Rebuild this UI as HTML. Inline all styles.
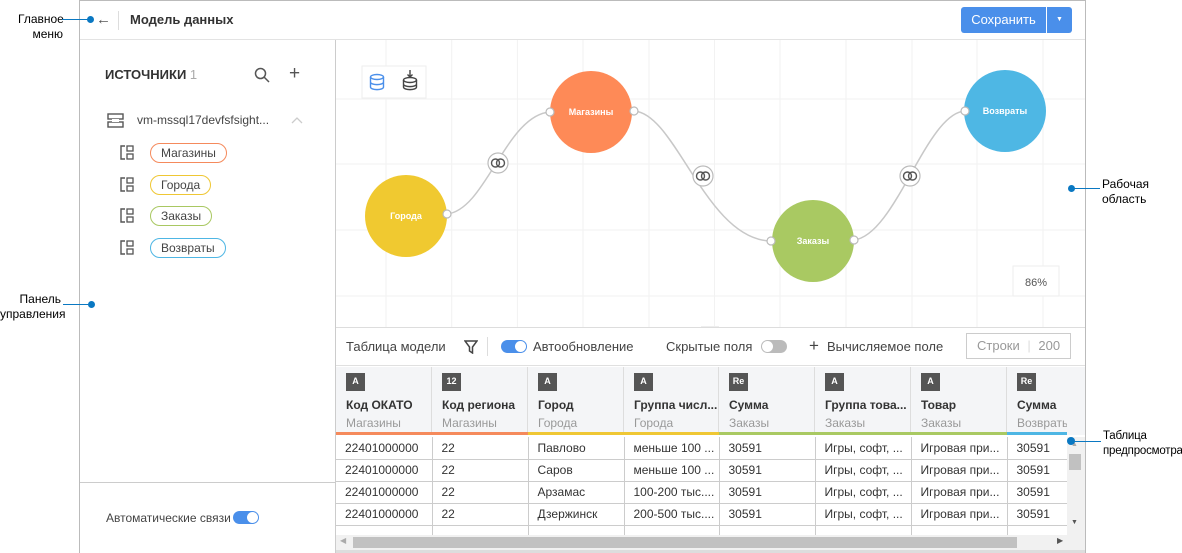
<!DOCTYPE html>
<html><head><meta charset="utf-8"><style>
*{box-sizing:border-box;margin:0;padding:0}
body{width:1182px;height:553px;background:#fff;font-family:"Liberation Sans",sans-serif;position:relative;overflow:hidden;color:#333}
.a{position:absolute}
.ann{font-size:12px;color:#000;line-height:15px}
.pill{position:absolute;left:150px;height:20px;border-radius:10px;border:1px solid;font-size:12px;line-height:18px;padding:0 10px;color:#444}
.ti{position:absolute;left:120px;width:15px;height:15px}
table{border-collapse:collapse;font-size:12px}
.th{position:absolute;top:367px;height:68px;border-right:1px solid #ddd;background:#f4f5f7}
.th .ic{position:absolute;left:10px;top:6px;width:19px;height:18px;background:#555;color:#fff;font-size:9px;font-weight:bold;text-align:center;line-height:16px}
.th b{position:absolute;left:10px;top:31px;font-size:12px;color:#333;white-space:nowrap}
.th i{position:absolute;left:10px;top:49px;font-style:normal;font-size:12px;color:#999;white-space:nowrap}
.th u{position:absolute;left:0;right:-1px;bottom:0;height:3px}
td{border-right:1px solid #ccc;border-bottom:1px solid #ccc;padding:0 0 0 9px;white-space:nowrap;overflow:hidden;height:22px}
</style></head><body>

<!-- frame -->
<div class="a" style="left:79px;top:0;width:1007px;height:553px;border:1px solid #bbb;border-bottom:none"></div>
<div class="a" style="left:80px;top:39px;width:1005px;height:1px;background:#e3e3e3"></div>
<div class="a" style="left:96px;top:11px;font-size:15px;color:#555">&#8592;</div>
<div class="a" style="left:118px;top:11px;width:1px;height:19px;background:#ddd"></div>
<div class="a" style="left:130px;top:12px;font-size:13px;font-weight:bold;color:#333">Модель данных</div>
<div class="a" style="left:961px;top:7px;width:85px;height:26px;background:#4a8fea;border-radius:3px 0 0 3px;color:#fff;font-size:13px;text-align:center;line-height:26px">Сохранить</div>
<div class="a" style="left:1047px;top:7px;width:25px;height:26px;background:#4a8fea;border-radius:0 3px 3px 0;color:#fff;font-size:7px;text-align:center;line-height:26px">&#9660;</div>

<!-- left panel -->
<div class="a" style="left:335px;top:40px;width:1px;height:513px;background:#ccc"></div>
<div class="a" style="left:105px;top:67px;font-size:13px;font-weight:bold;color:#333">ИСТОЧНИКИ <span style="font-weight:normal;color:#aaa">1</span></div>
<svg class="a" style="left:254px;top:67px" width="16" height="16"><circle cx="6.5" cy="6.5" r="5" fill="none" stroke="#555" stroke-width="1.5"/><line x1="10" y1="10" x2="15" y2="15" stroke="#555" stroke-width="1.5"/></svg>
<div class="a" style="left:289px;top:63px;font-size:19px;color:#555">+</div>
<svg class="a" style="left:107px;top:113px" width="17" height="15"><rect x="1" y="1" width="15" height="5" fill="none" stroke="#555" stroke-width="1.4"/><rect x="1" y="9" width="15" height="5" fill="none" stroke="#555" stroke-width="1.4"/><rect x="5" y="6" width="7" height="3" fill="#fff"/></svg>
<div class="a" style="left:137px;top:113px;font-size:12px;color:#444">vm-mssql17devfsfsight...</div>
<svg class="a" style="left:291px;top:117px" width="12" height="7"><path d="M1 6 L6 1 L11 6" fill="none" stroke="#ccc" stroke-width="1.3"/></svg>
<svg class="ti" style="top:145px" width="15" height="15"><path d="M5 1H1V14H5" fill="none" stroke="#555" stroke-width="1.4"/><rect x="7" y="1" width="6" height="5" fill="none" stroke="#555" stroke-width="1.3"/><rect x="7" y="9" width="6" height="5" fill="none" stroke="#555" stroke-width="1.3"/></svg>
<svg class="ti" style="top:177px" width="15" height="15"><path d="M5 1H1V14H5" fill="none" stroke="#555" stroke-width="1.4"/><rect x="7" y="1" width="6" height="5" fill="none" stroke="#555" stroke-width="1.3"/><rect x="7" y="9" width="6" height="5" fill="none" stroke="#555" stroke-width="1.3"/></svg>
<svg class="ti" style="top:208px" width="15" height="15"><path d="M5 1H1V14H5" fill="none" stroke="#555" stroke-width="1.4"/><rect x="7" y="1" width="6" height="5" fill="none" stroke="#555" stroke-width="1.3"/><rect x="7" y="9" width="6" height="5" fill="none" stroke="#555" stroke-width="1.3"/></svg>
<svg class="ti" style="top:240px" width="15" height="15"><path d="M5 1H1V14H5" fill="none" stroke="#555" stroke-width="1.4"/><rect x="7" y="1" width="6" height="5" fill="none" stroke="#555" stroke-width="1.3"/><rect x="7" y="9" width="6" height="5" fill="none" stroke="#555" stroke-width="1.3"/></svg>
<div class="pill" style="top:143px;border-color:#f58a5c">Магазины</div>
<div class="pill" style="top:175px;border-color:#efc734">Города</div>
<div class="pill" style="top:206px;border-color:#a9c862">Заказы</div>
<div class="pill" style="top:238px;border-color:#4eb6e4">Возвраты</div>
<div class="a" style="left:80px;top:482px;width:255px;height:1px;background:#ccc"></div>
<div class="a" style="left:106px;top:511px;font-size:12px;color:#444">Автоматические связи</div>
<div class="a" style="left:233px;top:511px;width:26px;height:13px;border-radius:7px;background:#4a8fea"></div>
<div class="a" style="left:247px;top:512px;width:11px;height:11px;border-radius:50%;background:#fff"></div>

<!-- canvas -->
<svg class="a" style="left:336px;top:40px" width="749" height="288">
<g stroke="#f2f2f2" stroke-width="1">
<line x1="50" y1="0" x2="50" y2="288"/><line x1="115.7" y1="0" x2="115.7" y2="288"/><line x1="181.4" y1="0" x2="181.4" y2="288"/><line x1="247" y1="0" x2="247" y2="288"/><line x1="313" y1="0" x2="313" y2="288"/><line x1="378.5" y1="0" x2="378.5" y2="288"/><line x1="444" y1="0" x2="444" y2="288"/><line x1="510" y1="0" x2="510" y2="288"/><line x1="576" y1="0" x2="576" y2="288"/><line x1="641" y1="0" x2="641" y2="288"/><line x1="707" y1="0" x2="707" y2="288"/>
<line x1="0" y1="59" x2="749" y2="59"/><line x1="0" y1="124" x2="749" y2="124"/><line x1="0" y1="190" x2="749" y2="190"/><line x1="0" y1="256" x2="749" y2="256"/>
</g>
<g fill="none" stroke="#c8c8c8" stroke-width="1.5">
<path d="M111 174 C150 170 170 75 214 72"/>
<path d="M298 71 C340 73 370 200 435 201"/>
<path d="M518 200 C560 195 590 73 629 71"/>
</g>
<circle cx="70" cy="176" r="41" fill="#f0c930"/>
<circle cx="255" cy="72" r="41" fill="#fe8a57"/>
<circle cx="477" cy="201" r="41" fill="#a9c962"/>
<circle cx="669" cy="71" r="41" fill="#4eb7e4"/>
<g font-family="Liberation Sans" font-size="9" font-weight="bold" fill="#fff" text-anchor="middle">
<text x="70" y="179">Города</text><text x="255" y="75">Магазины</text><text x="477" y="204">Заказы</text><text x="669" y="74">Возвраты</text></g>
<g fill="#fff" stroke="#bbb" stroke-width="1.2">
<circle cx="111" cy="174" r="4"/><circle cx="214" cy="72" r="4"/><circle cx="298" cy="71" r="4"/><circle cx="435" cy="201" r="4"/><circle cx="518" cy="200" r="4"/><circle cx="629" cy="71" r="4"/>
<circle cx="162" cy="123" r="10"/><circle cx="367" cy="136" r="10"/><circle cx="574" cy="136" r="10"/></g>
<g fill="none" stroke="#555" stroke-width="1.4">
<circle cx="159.5" cy="123" r="4"/><circle cx="164.5" cy="123" r="4"/><circle cx="364.5" cy="136" r="4"/><circle cx="369.5" cy="136" r="4"/><circle cx="571.5" cy="136" r="4"/><circle cx="576.5" cy="136" r="4"/></g>
<rect x="26" y="26" width="64" height="32" fill="#fff" stroke="#eee"/>
<g fill="none" stroke-width="1.4"><g stroke="#4a8fea"><ellipse cx="41" cy="37" rx="6.5" ry="2.5"/><path d="M34.5 37v10c0 3.5 13 3.5 13 0V37M34.5 42c0 3.5 13 3.5 13 0"/></g>
<g stroke="#444"><ellipse cx="74" cy="40" rx="6.5" ry="2.5"/><path d="M67.5 40v7c0 3.5 13 3.5 13 0v-7M67.5 44c0 3.5 13 3.5 13 0M74 30v7M71.5 34.5l2.5 2.5 2.5-2.5"/></g></g>
<rect x="677" y="226" width="46" height="30" fill="#fff" stroke="#eee"/>
<text x="700" y="246" font-family="Liberation Sans" font-size="11" fill="#555" text-anchor="middle">86%</text>
<rect x="365" y="286" width="18" height="3" fill="#eee"/>
</svg>
<div class="a" style="left:336px;top:327px;width:749px;height:1px;background:#ddd"></div>

<!-- table toolbar -->
<div class="a" style="left:346px;top:339px;font-size:13px;color:#444">Таблица модели</div>
<svg class="a" style="left:464px;top:340px" width="14" height="14"><path d="M1 1H13L8.5 7V13L5.5 11V7Z" fill="none" stroke="#444" stroke-width="1.5"/></svg>
<div class="a" style="left:487px;top:337px;width:1px;height:19px;background:#ddd"></div>
<div class="a" style="left:501px;top:340px;width:26px;height:13px;border-radius:7px;background:#4a8fea"></div>
<div class="a" style="left:515px;top:341px;width:11px;height:11px;border-radius:50%;background:#fff"></div>
<div class="a" style="left:533px;top:339px;font-size:13px;color:#444">Автообновление</div>
<div class="a" style="left:666px;top:339px;font-size:13px;color:#444">Скрытые поля</div>
<div class="a" style="left:761px;top:340px;width:26px;height:13px;border-radius:7px;background:#bbb"></div>
<div class="a" style="left:762px;top:341px;width:11px;height:11px;border-radius:50%;background:#fff"></div>
<div class="a" style="left:809px;top:336px;font-size:17px;color:#444">+</div>
<div class="a" style="left:827px;top:339px;font-size:13px;color:#444">Вычисляемое поле</div>
<div class="a" style="left:966px;top:333px;width:105px;height:26px;border:1px solid #ccc;font-size:13px;color:#999;line-height:24px;padding-left:10px">Строки <span style="color:#ddd;padding:0 4px">|</span> 200</div>

<!-- table -->
<div class="a" style="left:336px;top:365px;width:749px;height:1px;background:#e0e0e0"></div>
<div class="th" style="left:336px;width:96px"><div class="ic">A</div><b>Код ОКАТО</b><i>Магазины</i><u style="background:#f58a5c"></u></div>
<div class="th" style="left:432px;width:96px"><div class="ic">12</div><b>Код региона</b><i>Магазины</i><u style="background:#f58a5c"></u></div>
<div class="th" style="left:528px;width:96px"><div class="ic">A</div><b>Город</b><i>Города</i><u style="background:#efc734"></u></div>
<div class="th" style="left:624px;width:95px"><div class="ic">A</div><b>Группа числ...</b><i>Города</i><u style="background:#efc734"></u></div>
<div class="th" style="left:719px;width:96px"><div class="ic">Re</div><b>Сумма</b><i>Заказы</i><u style="background:#a9c962"></u></div>
<div class="th" style="left:815px;width:96px"><div class="ic">A</div><b>Группа това...</b><i>Заказы</i><u style="background:#a9c962"></u></div>
<div class="th" style="left:911px;width:96px"><div class="ic">A</div><b>Товар</b><i>Заказы</i><u style="background:#a9c962"></u></div>
<div class="th" style="left:1007px;width:60px;overflow:hidden;border-right:none"><div class="ic">Re</div><b>Сумма</b><i>Возвраты</i><u style="background:#4eb6e4"></u></div>
<div class="a" style="left:1067px;top:367px;width:18px;height:68px;background:#f4f5f7"></div>

<div class="a" style="left:336px;top:437px;width:731px;height:98px;overflow:hidden">
<table style="width:731px;table-layout:fixed;font-size:12px;color:#333">
<colgroup><col style="width:96px"><col style="width:96px"><col style="width:96px"><col style="width:95px"><col style="width:96px"><col style="width:96px"><col style="width:96px"><col style="width:60px"></colgroup>
<tr><td>22401000000</td><td>22</td><td>Павлово</td><td>меньше 100 ...</td><td>30591</td><td>Игры, софт, ...</td><td>Игровая при...</td><td>30591</td></tr>
<tr><td>22401000000</td><td>22</td><td>Саров</td><td>меньше 100 ...</td><td>30591</td><td>Игры, софт, ...</td><td>Игровая при...</td><td>30591</td></tr>
<tr><td>22401000000</td><td>22</td><td>Арзамас</td><td>100-200 тыс....</td><td>30591</td><td>Игры, софт, ...</td><td>Игровая при...</td><td>30591</td></tr>
<tr><td>22401000000</td><td>22</td><td>Дзержинск</td><td>200-500 тыс....</td><td>30591</td><td>Игры, софт, ...</td><td>Игровая при...</td><td>30591</td></tr>
<tr><td></td><td></td><td></td><td></td><td></td><td></td><td></td><td></td></tr>
</table></div>
<!-- scrollbars -->
<div class="a" style="left:1067px;top:437px;width:18px;height:98px;background:#f1f1f1"></div>
<div class="a" style="left:1069px;top:454px;width:12px;height:16px;background:#c1c1c1"></div>
<div class="a" style="left:1071px;top:441px;font-size:7px;color:#aaa">&#9650;</div>
<div class="a" style="left:1071px;top:519px;font-size:7px;color:#555">&#9660;</div>
<div class="a" style="left:336px;top:535px;width:749px;height:15px;background:#f1f1f1"></div>
<div class="a" style="left:353px;top:537px;width:664px;height:11px;background:#c1c1c1"></div>
<div class="a" style="left:340px;top:536px;font-size:8px;color:#aaa">&#9664;</div>
<div class="a" style="left:1057px;top:536px;font-size:8px;color:#555">&#9654;</div>
<div class="a" style="left:336px;top:550px;width:749px;height:3px;background:#ddd"></div>

<!-- annotations (on top) -->
<div class="a ann" style="left:18px;top:12px;text-align:right;width:45px">Главное<br>меню</div>
<div class="a" style="left:62px;top:19px;width:26px;height:1px;background:#0a78c2"></div>
<div class="a" style="left:87px;top:16px;width:7px;height:7px;border-radius:50%;background:#0a78c2"></div>
<div class="a ann" style="left:0;top:292px;width:61px;text-align:right">Панель<br>управления</div>
<div class="a" style="left:63px;top:304px;width:26px;height:1px;background:#0a78c2"></div>
<div class="a" style="left:88px;top:301px;width:7px;height:7px;border-radius:50%;background:#0a78c2"></div>
<div class="a ann" style="left:1102px;top:177px">Рабочая<br>область</div>
<div class="a" style="left:1073px;top:188px;width:27px;height:1px;background:#0a78c2"></div>
<div class="a" style="left:1068px;top:185px;width:7px;height:7px;border-radius:50%;background:#0a78c2"></div>
<div class="a ann" style="left:1103px;top:429px;font-size:11.5px;letter-spacing:-0.2px;white-space:nowrap">Таблица<br>предпросмотра</div>
<div class="a" style="left:1073px;top:441px;width:28px;height:1px;background:#0a78c2"></div>
<div class="a" style="left:1067px;top:437px;width:8px;height:8px;border-radius:50%;background:#0a78c2"></div>
</body></html>
